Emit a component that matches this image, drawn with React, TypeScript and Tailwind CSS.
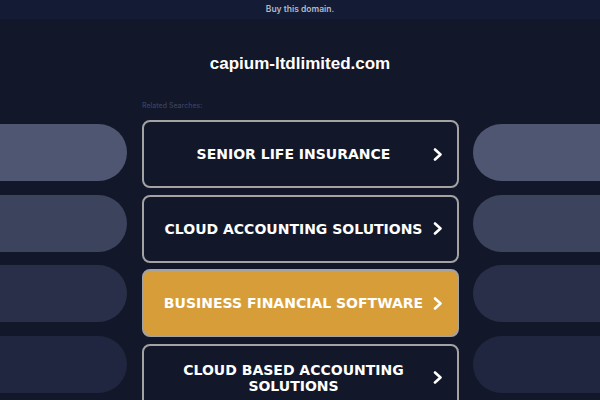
import React from "react";

// related search terms shown as big buttons
const searches = [
  { label: "SENIOR LIFE INSURANCE", active: false },
  { label: "CLOUD ACCOUNTING SOLUTIONS", active: false },
  { label: "BUSINESS FINANCIAL SOFTWARE", active: true },
  { label: "CLOUD BASED ACCOUNTING SOLUTIONS", active: false },
];

// decorative side pills, fading darker down the page
const pillColors = ["bg-[#4f5672]", "bg-[#3c435d]", "bg-[#292f48]", "bg-[#20263f]"];

function Chevron() {
  return (
    <svg className="w-[10px] h-[13px] shrink-0" viewBox="0 0 10 13" fill="none">
      <path
        d="M2 1.5 7.5 6.5 2 11.5"
        stroke="white"
        strokeWidth="2.6"
        strokeLinecap="round"
        strokeLinejoin="round"
      />
    </svg>
  );
}

function SidePills({ side }: { side: "left" | "right" }) {
  return (
    <div className="w-[127px] shrink-0 pt-[26px] flex flex-col gap-[13.7px]">
      {pillColors.map((c, i) => (
        <div
          key={i}
          className={
            c + " h-[57px] w-full " + (side == "left" ? "rounded-r-full" : "rounded-l-full")
          }
        />
      ))}
    </div>
  );
}

export default function App() {
  return (
    <div className="w-full h-[400px] overflow-hidden bg-[#121729] font-['Inter',sans-serif]">
      <div className="h-[19px] bg-[#141c35] flex items-center justify-center text-[8.5px] font-semibold text-[#b3b9c6]">
        Buy this domain.
      </div>

      <h1 className="mt-[35px] text-center text-[17px] leading-[20px] font-bold text-white font-['Liberation_Sans',Arial,sans-serif]">
        capium-ltdlimited.com
      </h1>

      <div className="mt-[24px] flex gap-[15px]">
        <SidePills side="left" />

        <div className="w-[317px] shrink-0">
          <div className="h-[12px] mb-[10px] pt-[2px] text-[7px] leading-[12px] font-medium text-[#3b4160]">
            Related Searches:
          </div>
          <div className="flex flex-col gap-[6.5px]">
            {searches.map((s, i) => (
              <div
                key={i}
                className={
                  (s.active ? "bg-[#d69d38]" : "bg-[#121729]") +
                  " h-[68px] rounded-[8px] border-2 border-[#a3a3a3] flex items-center pl-[16px] pr-[14px] gap-[6px]"
                }
              >
                <span className="flex-1 text-center text-white font-bold text-[14px] leading-[16px] font-['DejaVu_Sans',Verdana,sans-serif]">
                  {s.label}
                </span>
                <Chevron />
              </div>
            ))}
          </div>
        </div>

        <div className="ml-[-1px]">
          <SidePills side="right" />
        </div>
      </div>
    </div>
  );
}
